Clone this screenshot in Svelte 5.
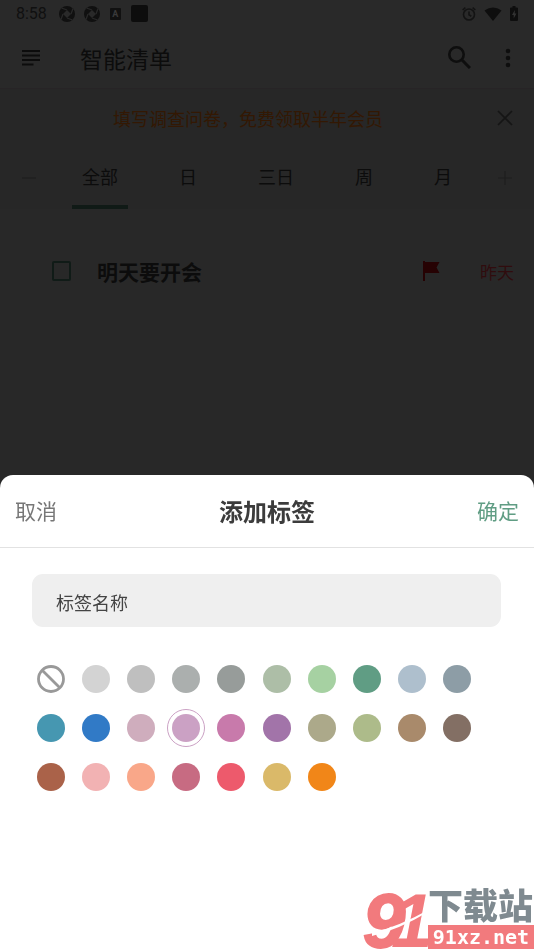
<script lang="ts">
  const tabs = ['全部', '日', '三日', '周', '月'];

  // first swatch is "no colour"
  const colors = [
    'none', '#d3d3d3', '#bfbfbf', '#abafae', '#979c9a', '#adbea7', '#a6d1a2', '#609d84', '#aebfcd', '#8d9da6',
    '#4697b1', '#317ac6', '#cfadbd', '#cba1c4', '#c87aab', '#a274a9', '#aca98a', '#adbb8a', '#a98a6b', '#836f64',
    '#aa6249', '#f2b2b3', '#f9a789', '#c76b82', '#ed5a6c', '#dab969', '#f18618',
  ];

  let activeTab = $state('全部');
  let selected = $state('#cba1c4');
  let name = $state('');
  let done = $state(false);
</script>

{#snippet shutter()}
  <svg width="16" height="16" viewBox="0 0 16 16">
    <circle cx="8" cy="8" r="8" fill="#101010" />
    <path d="M8 4 12 8 8 12 4 8z" fill="#292929" />
    <path d="M8 4 2.500 2M12 8l2-5.500M8 12l5.500 2M4 8l-2 5.500" stroke="#292929" stroke-width="1.200" />
  </svg>
{/snippet}

<div class="page">
  <div class="status">
    <span class="time">8:58</span>
    <div class="notices">
      {@render shutter()}
      {@render shutter()}
      <span class="badge">A</span>
      <span class="block"></span>
    </div>
    <div class="system">
      <svg width="14" height="14" viewBox="0 0 14 14" fill="none" stroke="#131313" stroke-width="1.600">
        <circle cx="7" cy="7.500" r="5.500" />
        <path d="M7 4.500v3.300l2.300 1.400M.6 3 3.400.7M13.400 3 10.600.7" />
      </svg>
      <svg width="18" height="14" viewBox="0 0 18 14"><path d="M.5 3.500Q9-2.500 17.500 3.500L9 14z" fill="#0e0e0e" /></svg>
      <svg width="8" height="15" viewBox="0 0 8 15">
        <path d="M2.500 0h3v1.500H7q1 0 1 1V14q0 1-1 1H1q-1 0-1-1V2.500q0-1 1-1h1.500z" fill="#0e0e0e" />
        <path d="M4.800 4 2 9h1.700v3.500L6.400 7.500H4.700z" fill="#333" />
      </svg>
    </div>
  </div>

  <header class="appbar">
    <button type="button" aria-label="菜单">
      <svg width="18" height="16" viewBox="0 0 18 16"><path d="M0 1h18M0 5.500h18M0 10h18M0 14.500h11.500" stroke="#0c0c0c" stroke-width="2" /></svg>
    </button>
    <h1>智能清单</h1>
    <button type="button" aria-label="搜索">
      <svg width="23" height="23" viewBox="0 0 23 23" fill="none" stroke="#0e0e0e" stroke-width="2.600">
        <circle cx="8.500" cy="8.500" r="7.200" />
        <path d="m13.500 13.500 8.500 8.500" stroke-width="3" />
      </svg>
    </button>
    <button type="button" aria-label="更多">
      <svg width="6" height="20" viewBox="0 0 6 20" fill="#0e0e0e">
        <circle cx="3" cy="3" r="2.300" /><circle cx="3" cy="10" r="2.300" /><circle cx="3" cy="17" r="2.300" />
      </svg>
    </button>
  </header>

  <div class="banner">
    <a href="#survey">填写调查问卷，免费领取半年会员</a>
    <button type="button" aria-label="关闭">
      <svg width="16" height="16" viewBox="0 0 16 16"><path d="m1 1 14 14M15 1 1 15" stroke="#151515" stroke-width="1.700" /></svg>
    </button>
  </div>

  <nav class="tabs">
    <button type="button" class="step" aria-label="减少">
      <svg width="14" height="14" viewBox="0 0 14 14"><path d="M0 7h14" stroke="#1f1f1f" stroke-width="1.200" /></svg>
    </button>
    <div class="tablist">
      {#each tabs as tab}
        <button type="button" class="tab" class:active={tab === activeTab} onclick={() => (activeTab = tab)}>{tab}</button>
      {/each}
    </div>
    <button type="button" class="step" aria-label="增加">
      <svg width="14" height="14" viewBox="0 0 14 14"><path d="M0 7h14M7 0v14" stroke="#1f1f1f" stroke-width="1.200" /></svg>
    </button>
  </nav>

  <main>
    <div class="task">
      <input id="task" type="checkbox" bind:checked={done} />
      <label for="task">明天要开会</label>
      <svg width="17" height="20" viewBox="0 0 17 20"><path d="M0 0h2v1h14.500l-3 5.500 3 5.500H2v8H0z" fill="#260203" /></svg>
      <span class="due">昨天</span>
    </div>
  </main>
</div>

<section class="sheet" aria-labelledby="sheet-title">
  <header>
    <button type="button" class="cancel">取消</button>
    <h2 id="sheet-title">添加标签</h2>
    <button type="button" class="confirm">确定</button>
  </header>

  <input class="name" type="text" placeholder="标签名称" aria-label="标签名称" bind:value={name} />

  <div class="swatches">
    {#each colors as color}
      <button
        type="button"
        class="swatch"
        class:selected={color === selected}
        style="color: {color === 'none' ? '#999' : color}"
        aria-label={color === 'none' ? '无颜色' : color}
        aria-pressed={color === selected}
        onclick={() => (selected = color)}
      >
        {#if color === 'none'}
          <svg width="28" height="28" viewBox="0 0 28 28" fill="none" stroke="currentColor" stroke-width="2.800">
            <circle cx="14" cy="14" r="12.500" />
            <path d="m5.200 5.200 17.600 17.600" />
          </svg>
        {:else}
          <span class="dot"></span>
        {/if}
      </button>
    {/each}
  </div>
</section>

<div class="brand">
  <svg width="64" height="59" viewBox="0 0 64 59">
    <g fill="#f27a7d">
      <text x="-1" y="57" stroke="#f27a7d" stroke-width="2">9</text>
      <text x="27" y="57">1</text>
    </g>
    <path d="M8 43Q36 36 64 20L64 22Q36 39 8 46z" fill="#fff" />
  </svg>
  <div class="brand-text">
    <strong>下载站</strong>
    <span>91xz.net</span>
  </div>
</div>

<style>
  :global(body) {
    margin: 0;
    background: #282828;
    font-family: Roboto, 'Noto Sans CJK SC', sans-serif;
  }

  button {
    display: flex;
    align-items: center;
    justify-content: center;
    padding: 0;
    border: 0;
    background: none;
    font: inherit;
    cursor: pointer;
  }

  svg { display: block; flex: none; }

  h1, h2 { margin: 0; }

  .page { min-height: 100vh; color: #0c0c0c; }

  .status {
    display: flex;
    align-items: center;
    height: 27px;
    padding: 0 16px;
    background: #292929;
  }
  .time { font-size: 16px; color: #101010; }
  .notices { display: flex; align-items: center; gap: 9px; margin-left: 12px; }
  .badge {
    width: 11px;
    margin: 0 1px;
    border-radius: 1px;
    background: #111;
    color: #3a3a3a;
    font-size: 9px;
    font-weight: 700;
    line-height: 12px;
    text-align: center;
  }
  .block { width: 17px; height: 17px; border-radius: 2px; background: #0d0d0d; }
  .system { display: flex; align-items: center; gap: 8px; margin-left: auto; }

  .appbar {
    display: flex;
    align-items: center;
    height: 61px;
    padding-left: 8px;
    background: #292929;
    border-bottom: 1px solid #272426;
  }
  .appbar button { width: 46px; height: 46px; }
  .appbar h1 { flex: 1; margin-left: 26px; font-size: 23px; font-weight: 400; }
  .appbar button:last-child { width: 52px; }

  .banner {
    display: flex;
    align-items: center;
    height: 58px;
    background: #272727;
  }
  .banner a {
    flex: 1;
    padding-left: 20px;
    color: #331803;
    font-size: 18px;
    text-align: center;
    text-decoration: none;
  }
  .banner button { width: 58px; height: 58px; }

  .tabs {
    display: flex;
    height: 62px;
    background: #272727;
  }
  .step { width: 58px; }
  .tablist { display: flex; flex: 1; justify-content: space-between; padding: 0 14px; }
  .tab {
    padding: 0 10px;
    border-bottom: 4px solid transparent;
    color: #0c0c0c;
    font-size: 18px;
  }
  .tab.active { border-bottom-color: #101a16; }

  .task {
    display: flex;
    align-items: center;
    height: 62px;
    margin-top: 31px;
    padding: 0 20px 0 52px;
  }
  .task input {
    appearance: none;
    width: 19px;
    height: 20px;
    margin: 0 26px 0 0;
    border: 2px solid #101b17;
    border-radius: 2px;
  }
  .task input:checked { background: #101b17; }
  .task label { flex: 1; font-size: 21px; font-weight: 700; }
  .due { margin-left: 40px; color: #300c0e; font-size: 17px; }

  .sheet {
    position: fixed;
    inset: 50% 0 0;
    overflow: auto;
    border-radius: 13px 13px 0 0;
    background: #fff;
  }
  .sheet header {
    display: flex;
    align-items: center;
    justify-content: space-between;
    height: 70px;
    padding: 0 15px 2px;
    border-bottom: 1px solid #e2e2e2;
  }
  .sheet h2 { color: #3c3c3c; font-size: 24px; font-weight: 700; }
  .cancel, .confirm { font-size: 21px; }
  .cancel { color: #777; }
  .confirm { color: #609d84; }

  .name {
    display: block;
    box-sizing: border-box;
    width: calc(100% - 65px);
    height: 53px;
    margin: 26px 33px 27px 32px;
    padding: 5px 24px 0;
    border: 0;
    border-radius: 11px;
    background: #efefef;
    color: #444;
    font: inherit;
    font-size: 18px;
  }
  .name::placeholder { color: #444; opacity: 1; }

  .swatches {
    display: grid;
    grid-template-columns: repeat(10, 1fr);
    padding: 0 54px 0 28px;
  }
  .swatch { height: 49px; }
  .dot { width: 28px; height: 28px; border-radius: 50%; background: currentColor; }
  .selected .dot {
    padding: 4px;
    border: 1px solid currentColor;
    background-clip: content-box;
  }

  .brand {
    position: fixed;
    right: 0;
    bottom: 1px;
    display: flex;
    align-items: flex-end;
  }
  .brand svg { overflow: visible; }
  .brand text { font: italic 700 76px 'Liberation Sans', sans-serif; }
  .brand-text { display: flex; flex-direction: column; width: 106px; }
  .brand strong {
    color: #7f8a90;
    font-size: 35px;
    font-weight: 900;
    line-height: 35px;
    white-space: nowrap;
  }
  .brand span {
    background: #f27a7d;
    color: #fff;
    font-family: 'DejaVu Sans Mono', monospace;
    font-size: 20px;
    font-weight: 700;
    line-height: 24px;
    text-align: center;
  }
</style>
